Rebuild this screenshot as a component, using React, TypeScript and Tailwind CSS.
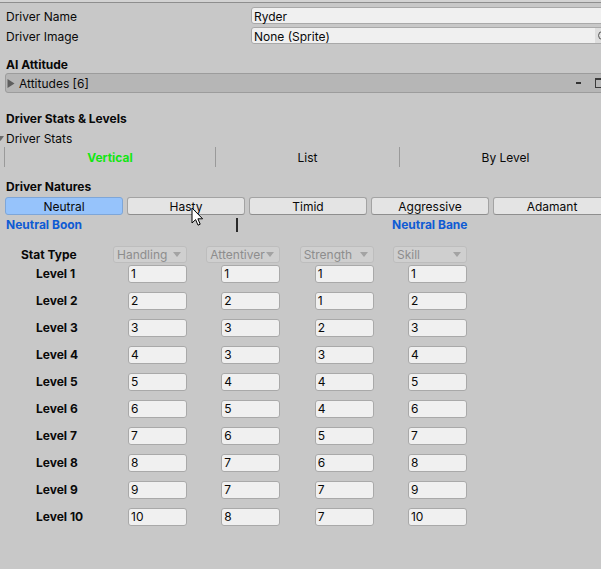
import React from "react";

const levels: number[][] = [
  [1, 1, 1, 1],
  [2, 2, 1, 2],
  [3, 3, 2, 3],
  [4, 3, 3, 4],
  [5, 4, 4, 5],
  [6, 5, 4, 6],
  [7, 6, 5, 7],
  [8, 7, 6, 8],
  [9, 7, 7, 9],
  [10, 8, 7, 10],
];
const statTypes = ["Handling", "Attentiver", "Strength", "Skill"];
const natures = ["Neutral", "Hasty", "Timid", "Aggressive", "Adamant"];

function DownArrow() {
  return (
    <svg width="8" height="5" viewBox="0 0 8 5" className="shrink-0">
      <path d="M0 0 L8 0 L4 5 Z" fill="#a3a3a3" />
    </svg>
  );
}

export default function App() {
  return (
    <div className="relative w-[601px] h-[569px] overflow-hidden bg-[#c8c8c8] text-[12px] text-[#090909] font-['Inter',sans-serif] leading-none">
      <div className="h-[2px] bg-[#d3d3d3]" />
      <div className="h-px bg-[#8e8e8e]" />

      {/* Driver Name */}
      <div className="mt-[4px] flex h-[17px] items-center">
        <div className="w-[251px] shrink-0 pl-[6px] pt-[2px]">Driver Name</div>
        <div className="flex h-[17px] w-[360px] shrink-0 items-center rounded-[3px] border border-[#a9a9a9] bg-[#f0f0f0] pl-[2px] pt-[2px]">
          Ryder
        </div>
      </div>

      {/* Driver Image */}
      <div className="mt-[3px] flex h-[17px] items-center">
        <div className="w-[251px] shrink-0 pl-[6px] pt-[2px]">Driver Image</div>
        <div className="flex h-[17px] w-[360px] shrink-0 overflow-hidden rounded-[3px] border border-[#a9a9a9] bg-[#f0f0f0]">
          <div className="flex w-[343px] shrink-0 items-center pl-[2px] pt-[2px]">None (Sprite)</div>
          <div className="flex w-[18px] shrink-0 items-center bg-[#dedede] pl-[3px]">
            <div className="h-[9px] w-[9px] rounded-full border border-[#555]" />
          </div>
        </div>
      </div>

      {/* AI Attitude */}
      <div className="mt-[11px] flex h-[18px] items-center pl-[6px] pt-[2px] font-bold">AI Attitude</div>
      <div className="ml-[5px] flex h-[20px] w-[601px] items-center rounded-[3px] border border-[#9c9c9c] bg-[#b6b6b6]">
        <svg width="8" height="9" viewBox="0 0 8 9" className="ml-[1px] shrink-0">
          <path d="M0.5 0 L7.5 4.5 L0.5 9 Z" fill="#5e5e5e" />
        </svg>
        <span className="ml-[4px] pt-[2px]">Attitudes [6]</span>
        <div className="flex-1" />
        <div className="h-[2px] w-[5px] bg-[#333]" />
        <div className="ml-[14px] h-[10px] w-[10px] shrink-0 border border-t-2 border-[#3a3a3a]" />
      </div>

      {/* Driver Stats & Levels */}
      <div className="mt-[16px] flex h-[18px] items-center pl-[6px] pt-[2px] font-bold">Driver Stats &amp; Levels</div>
      <div className="mt-[2px] flex h-[18px] items-center">
        <svg width="4" height="5" viewBox="0 0 4 5" className="shrink-0">
          <path d="M-3 0 L4 0 L0.5 5 Z" fill="#6a6a6a" />
        </svg>
        <span className="ml-[2px] pt-[2px]">Driver Stats</span>
      </div>
      <div className="flex h-[20px]">
        <div className="ml-[4px] flex w-[211px] shrink-0 items-center justify-center border-l border-[#9a9a9a] pt-[2px] font-bold text-[#12e612]">
          Vertical
        </div>
        <div className="flex w-[184px] shrink-0 items-center justify-center border-l border-[#9a9a9a] pt-[2px]">List</div>
        <div className="flex w-[212px] shrink-0 items-center justify-center border-l border-[#9a9a9a] pt-[2px]">By Level</div>
      </div>

      {/* Driver Natures */}
      <div className="mt-[10px] flex h-[18px] items-center pl-[6px] pt-[2px] font-bold">Driver Natures</div>
      <div className="mt-[2px] flex gap-[4px] pl-[5px]">
        {natures.map((n, i) => (
          <div
            key={n}
            className={
              i === 0
                ? "flex h-[18px] w-[118px] shrink-0 items-center justify-center rounded-[3px] border border-[#7ea6d8] bg-[#96c3fb] pt-[2px]"
                : "flex h-[18px] w-[118px] shrink-0 items-center justify-center rounded-[3px] border border-[#a3a3a3] border-b-[#8e8e8e] bg-[#e4e4e4] pt-[2px]"
            }
          >
            {n}
          </div>
        ))}
      </div>
      <div className="mt-[1px] flex h-[18px] items-center font-bold text-[#0f5bd4]">
        <div className="w-[392px] shrink-0 pl-[6px]">Neutral Boon</div>
        <div>Neutral Bane</div>
      </div>

      {/* Stat table */}
      <div className="mt-[12px] flex h-[17px] items-center">
        <div className="w-[113px] shrink-0 pl-[21px] font-bold">Stat Type</div>
        {statTypes.map((s) => (
          <div key={s} className="w-[93.33px] shrink-0">
            <div className="flex h-[17px] w-[74px] items-center justify-between rounded-[3px] border border-[#bdbdbd] bg-[#cfcfcf] pl-[3px] pr-[5px] text-[#8d8d8d]">
              <span className="pt-[1px]">{s}</span>
              <DownArrow />
            </div>
          </div>
        ))}
      </div>
      <div className="mt-[2px] flex flex-col gap-[9px]">
        {levels.map((row, i) => (
          <div key={i} className="flex h-[18px] items-center">
            <div className="w-[113px] shrink-0 pl-[36px] font-bold">Level {i + 1}</div>
            {row.map((v, j) => (
              <div key={j} className="w-[93.33px] shrink-0">
                <div className="flex w-[74px] justify-end">
                  <div className="flex h-[18px] w-[59px] items-center rounded-[3px] border border-[#a9a9a9] bg-[#f0f0f0] pl-[2px]">
                    {v}
                  </div>
                </div>
              </div>
            ))}
          </div>
        ))}
      </div>

      {/* text caret */}
      <div className="absolute left-[236px] top-[218px] h-[14px] w-[2px] bg-[#2a2a2a]" />

      {/* mouse cursor */}
      <svg width="13" height="20" viewBox="0 0 13 20" className="absolute left-[191px] top-[207px]">
        <path
          d="M1 1 L1 16 L4.6 12.6 L7 18.2 L9.2 17.2 L6.9 11.8 L11.6 11.8 Z"
          fill="#ffffff"
          stroke="#000000"
          strokeWidth="1"
          strokeLinejoin="round"
        />
      </svg>
    </div>
  );
}
